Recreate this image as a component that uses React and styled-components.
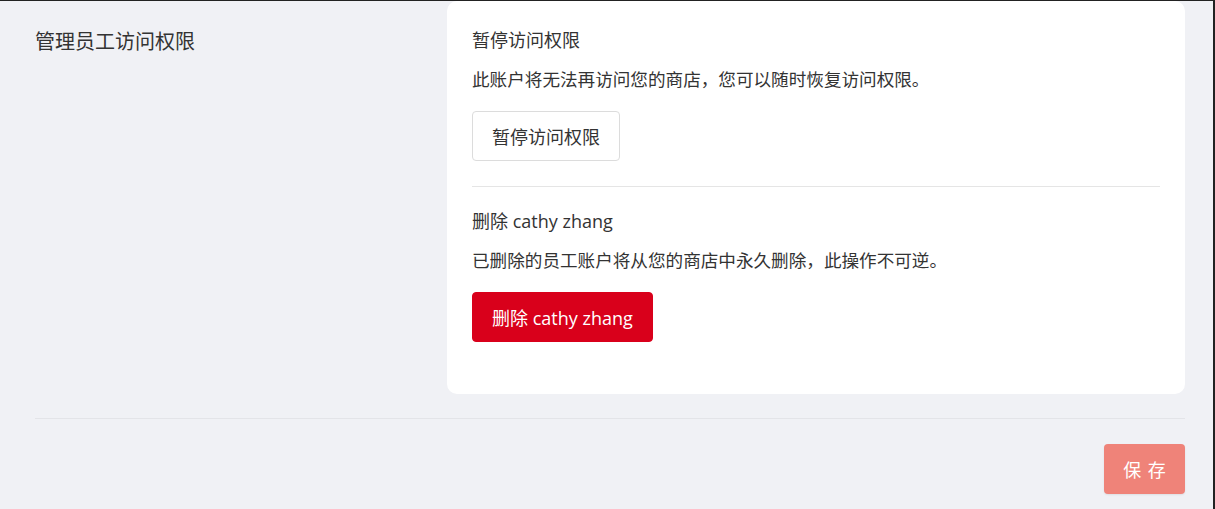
import React from 'react';
import styled, { createGlobalStyle } from 'styled-components';

const GlobalStyle = createGlobalStyle`
  html, body {
    margin: 0;
    padding: 0;
    background: #f0f1f5;
  }
  body {
    font-family: "Open Sans", "Noto Sans CJK SC", sans-serif;
    color: #333333;
  }
`;

export default function App () {
  return (
    <>
      <GlobalStyle />
      <Frame>
        <Section>
          <SideTitle>管理员工访问权限</SideTitle>
          <Card>
            <Block>
              <BlockTitle>暂停访问权限</BlockTitle>
              <BlockText>此账户将无法再访问您的商店，您可以随时恢复访问权限。</BlockText>
              <ActionButton>暂停访问权限</ActionButton>
            </Block>
            <Divider />
            <Block>
              <BlockTitle>删除 cathy zhang</BlockTitle>
              <BlockText>已删除的员工账户将从您的商店中永久删除，此操作不可逆。</BlockText>
              <ActionButton danger>删除 cathy zhang</ActionButton>
            </Block>
          </Card>
        </Section>
        <Footer>
          <SaveButton>保 存</SaveButton>
        </Footer>
      </Frame>
    </>
  );
}

const Frame = styled.div`
  height: 509px;
  box-sizing: border-box;
  border-top: 1px solid #222222;
  border-right: 2px solid #222222;
  padding: 0 28px 0 35px;
  overflow: hidden;
`;

const Section = styled.div`
  display: grid;
  grid-template-columns: 412px 1fr;
  padding-bottom: 24px;
  border-bottom: 1px solid #e3e4e8;
`;

const SideTitle = styled.h2`
  margin: 27px 0 0;
  font-size: 20px;
  line-height: 28px;
  font-weight: 400;
  color: #333333;
`;

const Card = styled.div`
  background: #ffffff;
  border-radius: 10px;
  padding: 27px 25px 52px;
`;

const Block = styled.div`
  display: flex;
  flex-direction: column;
  align-items: flex-start;
`;

const BlockTitle = styled.div`
  font-size: 18px;
  line-height: 24px;
  color: #333333;
`;

const BlockText = styled.p`
  margin: 15px 0 20px;
  font-size: 17.6px;
  line-height: 24px;
  color: #333333;
`;

const ActionButton = styled.button`
  height: 50px;
  padding: 0 19px;
  border-radius: 4px;
  font-family: "Open Sans", "Noto Sans CJK SC", sans-serif;
  font-size: 18px;
  border: 1px solid ${(p) => (p.danger ? '#d9001b' : '#dcdcdc')};
  background: ${(p) => (p.danger ? '#d9001b' : '#ffffff')};
  color: ${(p) => (p.danger ? '#ffffff' : '#333333')};
  cursor: pointer;
`;

const Divider = styled.hr`
  margin: 25px 0 22px;
  border: none;
  border-top: 1px solid #e5e5e5;
`;

const Footer = styled.div`
  display: flex;
  justify-content: flex-end;
  padding-top: 25px;
`;

const SaveButton = styled.button`
  width: 81px;
  height: 50px;
  padding: 0 0 0 1px;
  border: none;
  border-radius: 4px;
  background: #ef8379;
  color: #ffffff;
  font-family: "Open Sans", "Noto Sans CJK SC", sans-serif;
  font-size: 18px;
  letter-spacing: 1px;
  box-shadow: 0 1px 2px rgba(0, 0, 0, 0.08);
`;
